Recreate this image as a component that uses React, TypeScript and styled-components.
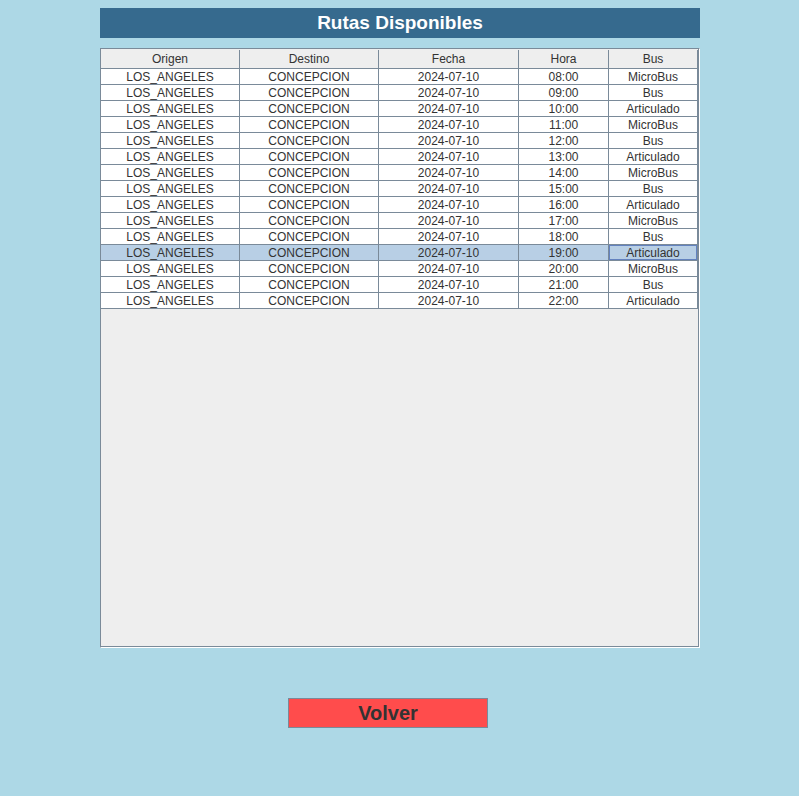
import React from 'react';
import styled, { createGlobalStyle } from 'styled-components';

const GlobalStyle = createGlobalStyle`
	html, body {
		margin: 0;
		padding: 0;
		background: #add8e6;
	}
	body {
		font-family: "Liberation Sans", Arial, sans-serif;
	}
`;

const Page = styled.div`
	width: 799px;
	height: 796px;
	background: #add8e6;
	padding-top: 8px;
	box-sizing: border-box;
`;

const Panel = styled.div`
	width: 600px;
	margin-left: 100px;
	display: flex;
	flex-direction: column;
`;

const TitleBar = styled.div`
	height: 30px;
	background: #366a8e;
	color: #ffffff;
	font-size: 19px;
	font-weight: bold;
	display: flex;
	align-items: center;
	justify-content: center;
`;

const ScrollPane = styled.div`
	margin-top: 10px;
	width: 600px;
	height: 600px;
	box-sizing: border-box;
	border-top: 1px solid #7a8a99;
	border-left: 1px solid #7a8a99;
	border-right: 1px solid #ffffff;
	border-bottom: 1px solid #ffffff;
`;

const Viewport = styled.div`
	height: 100%;
	box-sizing: border-box;
	background: #eeeeee;
	border-right: 1px solid #7a8a99;
	border-bottom: 1px solid #7a8a99;
`;

const Row = styled.div<{ $header?: boolean; $selected?: boolean }>`
	display: flex;
	height: ${p => (p.$header ? '20px' : '16px')};
	padding-top: ${p => (p.$header ? '1px' : '0')};
	box-sizing: border-box;
	background: ${p => (p.$header ? '#eeeeee' : p.$selected ? '#b8cfe5' : '#ffffff')};
	width: 597px;
`;

const Cell = styled.div<{ $w: number; $focus?: boolean }>`
	width: ${p => p.$w}px;
	flex: none;
	box-sizing: border-box;
	border-right: 1px solid #7a8a99;
	border-bottom: 1px solid #7a8a99;
	display: flex;
	align-items: center;
	justify-content: center;
	font-size: 12px;
	color: #333333;
	white-space: nowrap;
	position: relative;
	${p =>
		p.$focus &&
		`&::after {
			content: '';
			position: absolute;
			left: 0; top: 0; right: 0; bottom: 0;
			border: 1px solid #6382bf;
		}`}
`;

const Footer = styled.div`
	margin-top: 50px;
	padding-left: 288px;
`;

const Button = styled.button`
	width: 200px;
	height: 30px;
	background: #ff4c4c;
	border: 1px solid #7a8a99;
	color: #333333;
	font-family: "Liberation Sans", Arial, sans-serif;
	font-size: 20px;
	font-weight: bold;
	padding: 0;
	cursor: pointer;
`;

const widths = [139, 139, 140, 90, 89];
const headers = ['Origen', 'Destino', 'Fecha', 'Hora', 'Bus'];
const buses = ['MicroBus', 'Bus', 'Articulado'];

const rutas = Array.from({ length: 15 }, (_, i) => ({
	origen: 'LOS_ANGELES',
	destino: 'CONCEPCION',
	fecha: '2024-07-10',
	hora: `${String(8 + i).padStart(2, '0')}:00`,
	bus: buses[i % 3],
}));

export default function App() {
	const selected = 11;
	return (
		<Page>
			<GlobalStyle />
			<Panel>
				<TitleBar>Rutas Disponibles</TitleBar>
				<ScrollPane>
					<Viewport>
						<Row $header>
							{headers.map((h, i) => (
								<Cell key={h} $w={widths[i]}>{h}</Cell>
							))}
						</Row>
						{rutas.map((r, i) => {
							const values = [r.origen, r.destino, r.fecha, r.hora, r.bus];
							return (
								<Row key={i} $selected={i === selected}>
									{values.map((v, j) => (
										<Cell key={j} $w={widths[j]} $focus={i === selected && j === 4}>
											{v}
										</Cell>
									))}
								</Row>
							);
						})}
					</Viewport>
				</ScrollPane>
			</Panel>
			<Footer>
				<Button>Volver</Button>
			</Footer>
		</Page>
	);
}
